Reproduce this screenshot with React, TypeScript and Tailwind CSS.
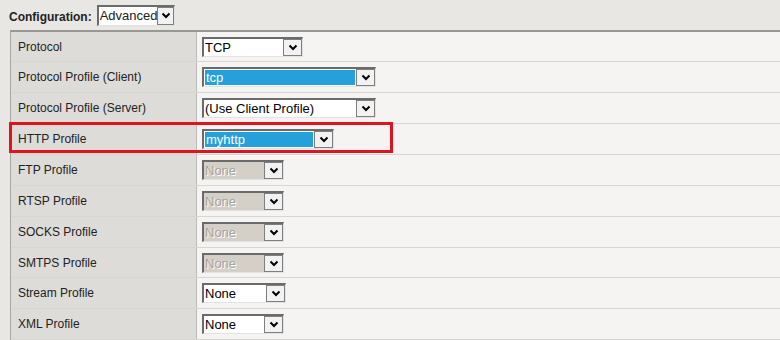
import React from "react";

function Chevron() {
  return (
    <svg width="10" height="7" viewBox="0 0 10 7">
      <polyline points="1.5,1.5 5,5 8.5,1.5" fill="none" stroke="#000" strokeWidth="2" />
    </svg>
  );
}

function Sel({
  w,
  text,
  hl = false,
  disabled = false,
}: {
  w: number;
  text: string;
  hl?: boolean;
  disabled?: boolean;
}) {
  return (
    <div
      className={`flex h-[20px] border-t-2 border-l-2 border-[#6b6b6b] border-r border-b border-r-[#e2e2e2] border-b-[#e2e2e2] ${
        disabled ? "bg-[#d4d0c8]" : "bg-white"
      }`}
      style={{ width: w }}
    >
      <div className="flex-1 flex items-center min-w-0">
        {hl ? (
          <div className="ml-[1px] h-[15px] flex-1 bg-[#26a0da] text-white flex items-center pl-[1px] leading-none mr-[1px]">
            {text}
          </div>
        ) : (
          <span
            className={`pl-[1px] leading-none ${
              disabled ? "text-[#a3a3a3] [text-shadow:1px_1px_0_#ffffff]" : "text-black"
            }`}
          >
            {text}
          </span>
        )}
      </div>
      <div className="w-[19px] h-[17px] border border-[#7e7e7e] bg-[#f2f2f2] flex items-center justify-center">
        <Chevron />
      </div>
    </div>
  );
}

const rows: { label: string; w: number; text: string; h: string; hl?: boolean; disabled?: boolean }[] = [
  { label: "Protocol", w: 101, text: "TCP", h: "h-[30px]" },
  { label: "Protocol Profile (Client)", w: 174, text: "tcp", hl: true, h: "h-[31px]" },
  { label: "Protocol Profile (Server)", w: 174, text: "(Use Client Profile)", h: "h-[31px]" },
  { label: "HTTP Profile", w: 132, text: "myhttp", hl: true, h: "h-[31px]" },
  { label: "FTP Profile", w: 82, text: "None", disabled: true, h: "h-[31px]" },
  { label: "RTSP Profile", w: 82, text: "None", disabled: true, h: "h-[31px]" },
  { label: "SOCKS Profile", w: 82, text: "None", disabled: true, h: "h-[31px]" },
  { label: "SMTPS Profile", w: 82, text: "None", disabled: true, h: "h-[30px]" },
  { label: "Stream Profile", w: 84, text: "None", h: "h-[31px]" },
  { label: "XML Profile", w: 82, text: "None", h: "h-[31px]" },
];

export default function App() {
  return (
    <div
      className="w-[780px] h-[340px] overflow-hidden bg-[#e9e7e4] text-[12px] text-[#222]"
      style={{ fontFamily: '"Liberation Sans", Arial, sans-serif' }}
    >
      <div className="h-[30px] flex items-center pl-[9px] gap-[5px]">
        <span className="font-bold text-[12px] text-[#222] pt-[4px]">Configuration:</span>
        <div className="flex h-[21px] border-t-2 border-l-2 border-[#6b6b6b] border-r border-b border-r-[#e2e2e2] border-b-[#e2e2e2] bg-white w-[78px] text-[13px]">
          <div className="flex-1 flex items-center pl-[1px] leading-none">Advanced</div>
          <div className="w-[18px] h-[18px] border border-[#7e7e7e] bg-[#f2f2f2] flex items-center justify-center">
            <Chevron />
          </div>
        </div>
      </div>
      <div className="relative ml-[10px] border-t-2 border-t-[#9a9894] border-l border-l-[#a9a7a3]">
        {rows.map((r, i) => (
          <div key={i} className={`flex ${r.h} border-b border-[#d8d6d2]`}>
            <div className="w-[186px] bg-[#dedcd9] border-r border-[#bdbbb7] flex items-center pl-[7px] text-[12px] text-[#222]">
              {r.label}
            </div>
            <div className="flex-1 bg-[#f5f4f2] flex items-center pl-[5px] text-[13px]">
              <Sel w={r.w} text={r.text} hl={r.hl} disabled={r.disabled} />
            </div>
          </div>
        ))}
        <div className="absolute left-[-2px] top-[90px] w-[384px] h-[31px] border-[3px] border-[#e0141e] pointer-events-none" />
      </div>
    </div>
  );
}
